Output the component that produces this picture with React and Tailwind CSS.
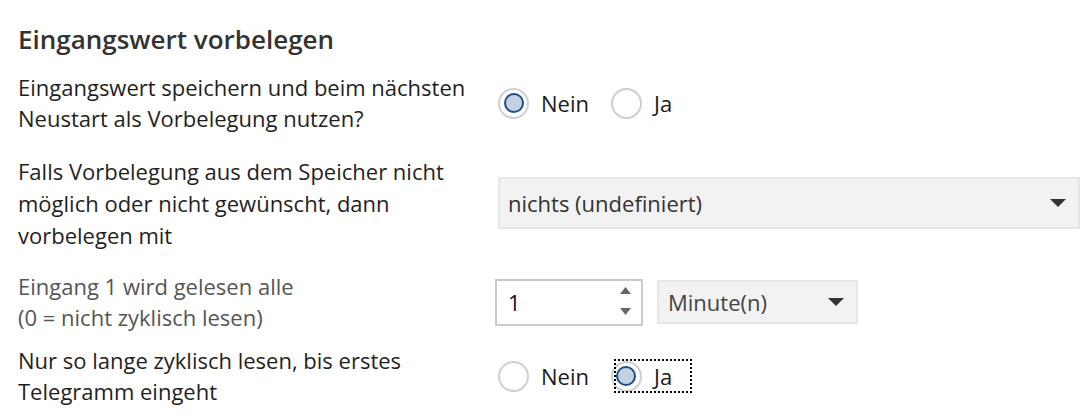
import React, { useState } from 'react';

const Radio = ({ checked, label, focused, onClick }) => {
  return (
    <label onClick={onClick} className='relative flex cursor-pointer items-center gap-[12px]'>
      <span className='flex h-[31px] w-[31px] items-center justify-center rounded-full border-2 border-[#cfcfcf] bg-white'>
        {checked && (
          <span className='h-[20px] w-[20px] rounded-full border-2 border-[#1d4f86] bg-[#c3d2e3]' />
        )}
      </span>
      <span className='text-[22px] leading-[30px] text-[#1a1a1a]'>{label}</span>
      {focused && (
        <span className='pointer-events-none absolute -bottom-[1px] -right-[20px] -top-[2px] left-[3px] border-2 border-dotted border-black' />
      )}
    </label>
  );
};

const Caret = () => (
  <svg width='16' height='8' viewBox='0 0 16 8'>
    <path d='M0 0 L16 0 L8 8 Z' fill='#333' />
  </svg>
);

export default function App() {
  const [keep, setKeep] = useState('nein');
  const [untilFirst, setUntilFirst] = useState('ja');

  return (
    <div className="h-[418px] w-[1092px] overflow-hidden bg-white pl-[18px] pr-[12px] pt-[21px] font-['Open_Sans',sans-serif] text-[#1f1f1f]">
      <h2 className='text-[26px] font-semibold leading-[36px] text-[#333]'>Eingangswert vorbelegen</h2>

      <div className='flex flex-col text-[22px] leading-[31px]'>
        <div className='mt-[15px] flex items-center'>
          <div className='w-[480px]'>
            Eingangswert speichern und beim nächsten<br />Neustart als Vorbelegung nutzen?
          </div>
          <div className='flex items-center gap-[22px]'>
            <Radio checked={keep === 'nein'} label='Nein' onClick={() => setKeep('nein')} />
            <Radio checked={keep === 'ja'} label='Ja' onClick={() => setKeep('ja')} />
          </div>
        </div>

        <div className='mt-[21px] flex items-center leading-[32px]'>
          <div className='w-[480px]'>
            Falls Vorbelegung aus dem Speicher nicht<br />möglich oder nicht gewünscht, dann<br />vorbelegen mit
          </div>
          <div className='flex h-[52px] flex-1 items-center justify-between border-2 border-[#e6e6e6] bg-[#f2f2f2] pl-[8px] pr-[12px]'>
            <span className='text-[22px] text-[#333]'>nichts (undefiniert)</span>
            <Caret />
          </div>
        </div>

        <div className='mt-[20px] flex items-center'>
          <div className='w-[480px] text-[#555]'>
            Eingang 1 wird gelesen alle<br />(0 = nicht zyklisch lesen)
          </div>
          <div className='flex items-center gap-[14px]'>
            <div className='-ml-[3px] flex h-[47px] w-[148px] items-center justify-between border-2 border-[#cccccc] bg-white pl-[11px] pr-[10px]'>
              <span className='text-[22px] text-[#111]'>1</span>
              <div className='-mt-[3px] flex flex-col gap-[14px]'>
                <svg width='11' height='7' viewBox='0 0 11 7'>
                  <path d='M0 7 L11 7 L5.5 0 Z' fill='#666' />
                </svg>
                <svg width='11' height='7' viewBox='0 0 11 7'>
                  <path d='M0 0 L11 0 L5.5 7 Z' fill='#666' />
                </svg>
              </div>
            </div>
            <div className='flex h-[44px] w-[201px] items-center justify-between border-2 border-[#e6e6e6] bg-[#f2f2f2] pl-[9px] pr-[12px]'>
              <span className='text-[22px] text-[#444]'>Minute(n)</span>
              <Caret />
            </div>
          </div>
        </div>

        <div className='mt-[12px] flex items-center'>
          <div className='w-[480px]'>
            Nur so lange zyklisch lesen, bis erstes<br />Telegramm eingeht
          </div>
          <div className='flex items-center gap-[22px]'>
            <Radio checked={untilFirst === 'nein'} label='Nein' onClick={() => setUntilFirst('nein')} />
            <Radio checked={untilFirst === 'ja'} label='Ja' focused onClick={() => setUntilFirst('ja')} />
          </div>
        </div>
      </div>
    </div>
  );
}
